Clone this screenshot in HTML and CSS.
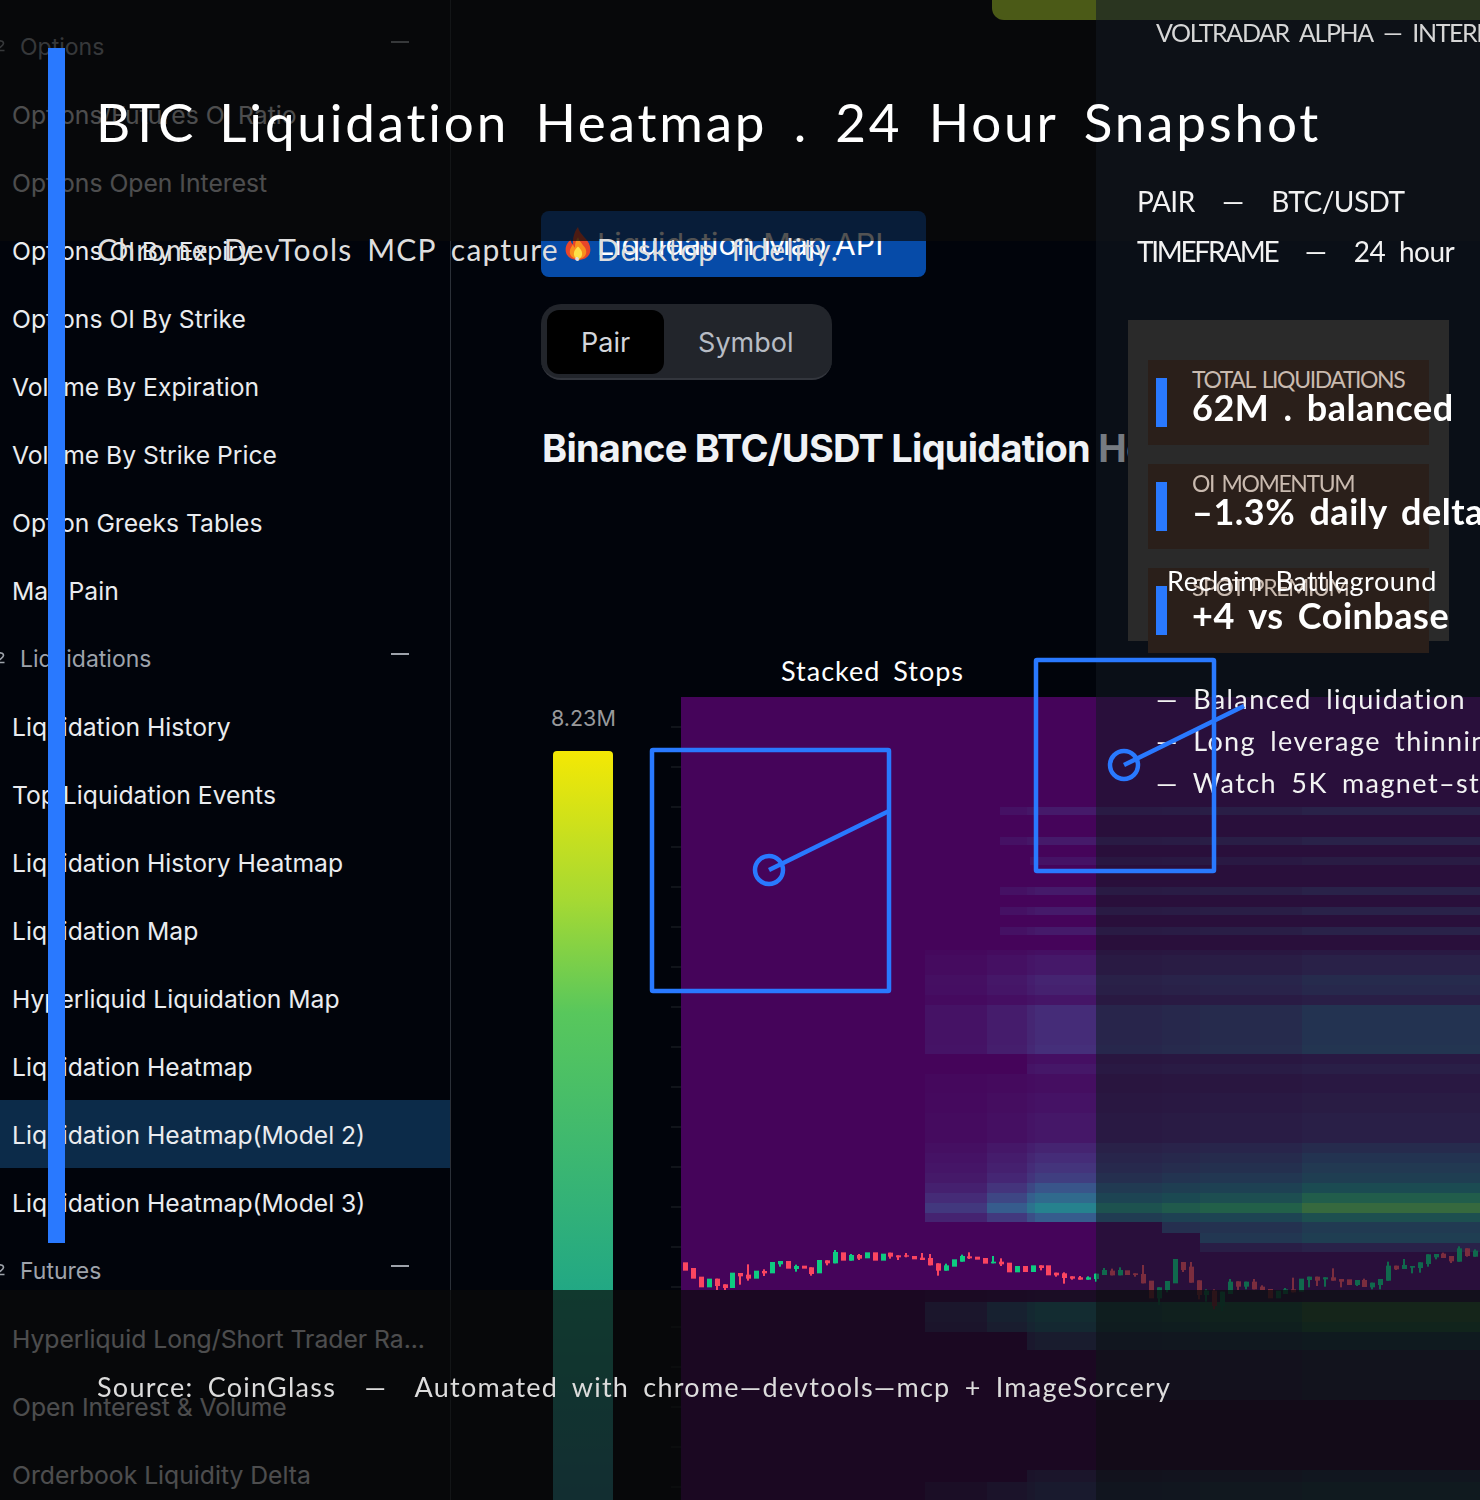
FILE: index.html
```html
<!DOCTYPE html>
<html lang="en">
  <head>
    <meta charset="UTF-8" />
    <meta name="viewport" content="width=device-width, initial-scale=1.0" />
    <title>BTC Liquidation Heatmap</title>
    <link rel="stylesheet" href="styles.css">
  </head>

  <body>
    <div class="page">
      <aside class="sidebar">
        <div class="nav-head">
          <svg class="nav-glyph" viewBox="0 0 5 12"><path d="M-3 2.5C-1 0 3.5 .5 3.5 3.5 3.5 6 -1 7 -3 10.5H4.5" /></svg>
          <span>Options</span><i class="nav-minus"></i>
        </div>
        <a class="nav-row">Options/Futures OI Ratio</a>
        <a class="nav-row">Options Open Interest</a>
        <a class="nav-row">Options OI By Expiry</a>
        <a class="nav-row">Options OI By Strike</a>
        <a class="nav-row">Volume By Expiration</a>
        <a class="nav-row">Volume By Strike Price</a>
        <a class="nav-row">Option Greeks Tables</a>
        <a class="nav-row">Max Pain</a>
        <div class="nav-head">
          <svg class="nav-glyph" viewBox="0 0 5 12"><path d="M-3 2.5C-1 0 3.5 .5 3.5 3.5 3.5 6 -1 7 -3 10.5H4.5" /></svg>
          <span>Liquidations</span><i class="nav-minus"></i>
        </div>
        <a class="nav-row">Liquidation History</a>
        <a class="nav-row">Top Liquidation Events</a>
        <a class="nav-row">Liquidation History Heatmap</a>
        <a class="nav-row">Liquidation Map</a>
        <a class="nav-row">Hyperliquid Liquidation Map</a>
        <a class="nav-row">Liquidation Heatmap</a>
        <a class="nav-row selected">Liquidation Heatmap(Model 2)</a>
        <a class="nav-row">Liquidation Heatmap(Model 3)</a>
        <div class="nav-head">
          <svg class="nav-glyph" viewBox="0 0 5 12"><path d="M-3 2.5C-1 0 3.5 .5 3.5 3.5 3.5 6 -1 7 -3 10.5H4.5" /></svg>
          <span>Futures</span><i class="nav-minus"></i>
        </div>
        <a class="nav-row">Hyperliquid Long/Short Trader Ra...</a>
        <a class="nav-row">Open Interest &amp; Volume</a>
        <a class="nav-row">Orderbook Liquidity Delta</a>
      </aside>

      <main class="content">
        <div class="api-badge">
          <svg class="fire" viewBox="0 0 24 32">
            <path fill="#e8452a" d="M12 0c1 5 4 7 7 11 3 3 5 7 5 11 0 6-5 10-12 10S0 28 0 22c0-5 3-8 5-10 0 3 1 4 2 5 0-6 1-12 5-17z" />
            <path fill="#f98f1d" d="M12 10c1 3 3 5 5 8 2 2 3 4 3 6 0 4-3 7-8 7s-8-3-8-7c0-3 2-5 3-7 1 2 1 2 2 3 0-4 1-7 3-10z" />
            <path fill="#fde047" d="M12 19c2 2 4 4 4 7s-2 5-4 5-4-2-4-5 2-5 4-7z" />
          </svg>
          <span>Liquidation Map API</span>
        </div>

        <div class="mode-tabs">
          <button class="mode-tab active">Pair</button>
          <button class="mode-tab">Symbol</button>
        </div>

        <h2 class="page-title">Binance BTC/USDT Liquidation Heatmap</h2>

        <section class="chart">
          <div class="legend">
            <span class="legend-max">8.23M</span>
            <div class="legend-bar"></div>
          </div>
          <div class="axis-ticks"></div>
          <canvas id="heatmap" width="799" height="803"></canvas>
        </section>
      </main>
    </div>

    <!-- capture overlay on top of the page -->
    <div class="dim dim-top"></div>
    <div class="dim dim-right"></div>
    <div class="dim dim-bottom"></div>
    <div class="olive-bar"></div>
    <div class="accent-bar"></div>

    <p class="ov ov-brand">VOLTRADAR ALPHA — INTERNAL</p>
    <h1 class="ov ov-title"><span class="btc">BTC</span> Liquidation Heatmap . 24 Hour Snapshot</h1>
    <p class="ov ov-sub">Chrome DevTools MCP capture . Desktop fidelity.</p>
    <p class="ov ov-meta ov-pair">PAIR  —  BTC/USDT</p>
    <p class="ov ov-meta ov-frame"><span class="tight">TIMEFRAME</span>  —  24 hour</p>

    <div class="stats">
      <div class="stat">
        <i class="stat-mark"></i>
        <div>
          <div class="stat-label">TOTAL LIQUIDATIONS</div>
          <div class="stat-value">62M . balanced</div>
        </div>
      </div>
      <div class="stat">
        <i class="stat-mark"></i>
        <div>
          <div class="stat-label">OI MOMENTUM</div>
          <div class="stat-value">–1.3% daily delta</div>
        </div>
      </div>
      <div class="stat">
        <i class="stat-mark"></i>
        <div>
          <div class="stat-label">SPOT PREMIUM</div>
          <div class="stat-value">+4 vs Coinbase</div>
        </div>
      </div>
    </div>

    <p class="ov ov-callout ov-reclaim">Reclaim Battleground</p>
    <p class="ov ov-callout ov-stops">Stacked Stops</p>

    <ul class="ov ov-notes">
      <li>— Balanced liquidation levels</li>
      <li>— Long leverage thinning out</li>
      <li>— Watch 5K magnet–stops</li>
    </ul>

    <p class="ov ov-source">Source: CoinGlass  —  Automated with chrome—devtools—mcp + ImageSorcery</p>

    <svg class="marks" viewBox="0 0 1480 1500">
      <rect x="652" y="750" width="237" height="241" rx="1" />
      <circle cx="769" cy="870" r="14" />
      <path d="M769 870 889 811" />
      <rect x="1036" y="660" width="178" height="211" rx="1" />
      <circle cx="1124" cy="765" r="14" />
      <path d="M1124 765 1244 706" />
    </svg>

    <script src="chart.js"></script>
  </body>
</html>
```

FILE: styles.css
```css
html,
body {
  margin: 0;
  padding: 0;
}

body {
  position: relative;
  width: 1480px;
  height: 1500px;
  overflow: hidden;
  background: #01040b;
  font-family: Inter, "Noto Sans", sans-serif;
  color: #eaecef;
}

.page {
  display: flex;
  height: 1500px;
  overflow: hidden;
}

/* sidebar */

.sidebar {
  flex: 0 0 450px;
  padding-top: 12px;
  border-right: 1px solid #2b3038;
}

.nav-head,
.nav-row {
  display: flex;
  align-items: center;
  height: 68px;
  box-sizing: border-box;
  padding-top: 2px;
  white-space: nowrap;
}

.nav-row {
  padding-left: 12px;
  font-size: 24.7px;
}

.nav-row.selected {
  background: #0c2b49;
}

.nav-head {
  color: #9ea3ab;
  padding-left: 20px;
  position: relative;
  font-size: 23px;
}

.nav-glyph {
  position: absolute;
  left: 0;
  top: 28px;
  width: 5px;
  height: 12px;
  fill: none;
  stroke: #9ea3ab;
  stroke-width: 1.6;
}

.nav-minus {
  width: 18px;
  height: 2px;
  margin-left: auto;
  margin-right: 41px;
  margin-top: -10px;
  background: #9ea3ab;
}

/* main column */

.content {
  flex: 1;
  padding: 211px 0 0 90px;
  min-width: 0;
}

.api-badge {
  display: flex;
  align-items: center;
  gap: 6px;
  width: 385px;
  height: 66px;
  box-sizing: border-box;
  padding: 0 0 0 24px;
  background: #064ba8;
  border-radius: 8px;
  font-size: 30.4px;
  color: #fff;
}

.fire {
  width: 26px;
  height: 33px;
  margin-top: -2px;
}

.mode-tabs {
  display: flex;
  width: 291px;
  height: 76px;
  box-sizing: border-box;
  margin-top: 27px;
  padding: 6px;
  background: #22252b;
  border-bottom: 2px solid #33363d;
  border-radius: 20px;
}

.mode-tab {
  border: none;
  background: none;
  height: 64px;
  padding: 0 34px;
  font-family: inherit;
  font-size: 27px;
  color: #b7bcc4;
  border-radius: 12px;
}

.mode-tab.active {
  background: #000;
  color: #d3d6db;
}

.page-title {
  margin: 45px 0 0 1px;
  font-size: 38px;
  line-height: 46px;
  font-weight: 700;
  letter-spacing: -0.75px;
  color: #f0f2f5;
  white-space: nowrap;
}

.chart {
  display: flex;
  margin: 226px 0 0 10px;
}

.legend {
  width: 64px;
  padding-top: 7px;
}

.legend-max {
  display: block;
  height: 28px;
  line-height: 28px;
  font-size: 21.5px;
  text-align: center;
  color: #98999b;
}

.legend-bar {
  width: 60px;
  height: 749px;
  margin: 19px 0 0 2px;
  border-radius: 4px 4px 0 0;
  background: linear-gradient(#f4e804 0%, #a5d933 20%, #58c75c 35%, #22a884 72%, #26828e 100%);
}

.axis-ticks {
  width: 10px;
  height: 803px;
  margin-left: 56px;
  background: linear-gradient(#10141a 0 2px, transparent 2px) 0 29px / 10px 40px;
}

#heatmap {
  display: block;
  flex: none;
}

/* overlay layers */

.dim {
  position: absolute;
}

.dim-top {
  left: 0;
  right: 0;
  top: 0;
  height: 241px;
  background: rgba(10, 10, 10, 0.7);
}

.dim-right {
  left: 1096px;
  right: 0;
  top: 0;
  bottom: 0;
  background: rgba(18, 26, 34, 0.55);
}

.dim-bottom {
  left: 0;
  right: 0;
  top: 1290px;
  bottom: 0;
  background: rgba(10, 10, 10, 0.7);
}

.olive-bar {
  position: absolute;
  left: 992px;
  right: 0;
  top: 0;
  height: 20px;
  border-radius: 0 0 0 12px;
  background: linear-gradient(90deg, #4b5a17 0 104px, #2a3520 104px);
}

.accent-bar {
  position: absolute;
  left: 48px;
  top: 48px;
  width: 17px;
  height: 1195px;
  background: #2979ff;
}

.ov {
  position: absolute;
  margin: 0;
  padding: 0;
  font-family: Lato, "Open Sans", sans-serif;
  font-weight: 400;
  white-space: pre;
}

.ov-brand {
  left: 1156px;
  right: 0;
  top: 17px;
  overflow: hidden;
  line-height: 30px;
  font-size: 25px;
  letter-spacing: -1.4px;
  word-spacing: 6px;
  color: #d6d6d6;
}

.ov-title {
  left: 96px;
  top: 89px;
  line-height: 66px;
  font-size: 53px;
  letter-spacing: 2.8px;
  word-spacing: 10px;
  color: #fff;
}

.btc {
  letter-spacing: -0.5px;
}

.ov-sub {
  left: 97px;
  top: 231px;
  line-height: 36px;
  font-size: 30px;
  letter-spacing: 1.2px;
  word-spacing: 6px;
  color: #dedede;
}

.ov-meta {
  left: 1137px;
  line-height: 34px;
  font-size: 28px;
  letter-spacing: -0.5px;
  word-spacing: 7px;
  color: #f2f2f2;
}

.ov-pair {
  top: 184px;
}

.ov-frame {
  top: 234px;
}

.tight {
  letter-spacing: -2.3px;
}

.stats {
  position: absolute;
  left: 1128px;
  top: 320px;
  width: 321px;
  height: 321px;
  box-sizing: border-box;
  padding: 40px 20px 0;
  background: #2a2a2a;
}

.stat {
  display: flex;
  align-items: center;
  gap: 25px;
  height: 85px;
  margin-bottom: 19px;
  padding-left: 8px;
  background: #2a1f1a;
  font-family: Lato, "Open Sans", sans-serif;
  white-space: nowrap;
}

.stat-mark {
  flex: none;
  width: 11px;
  height: 49px;
  background: #2979ff;
}

.stat-label {
  height: 26px;
  line-height: 26px;
  margin-top: -14px;
  font-size: 23px;
  letter-spacing: -1.4px;
  word-spacing: 3px;
  color: #c9baaf;
}

.stat-value {
  width: 288px;
  height: 36px;
  margin-top: -3px;
  overflow: hidden;
  line-height: 36px;
  font-size: 36px;
  font-weight: 700;
  letter-spacing: 0.5px;
  word-spacing: 5px;
  color: #fff;
}

.ov-callout {
  font-size: 27px;
  line-height: 32px;
  letter-spacing: 1px;
  word-spacing: 5px;
  color: #fff;
}

.ov-reclaim {
  left: 1167px;
  top: 565px;
  letter-spacing: 0.6px;
}

.ov-stops {
  left: 781px;
  top: 655px;
}

.ov-notes {
  left: 1156px;
  right: 0;
  top: 678px;
  overflow: hidden;
  list-style: none;
  font-size: 27px;
  line-height: 42px;
  letter-spacing: 1.4px;
  word-spacing: 6px;
  white-space: nowrap;
  color: #f2f2f2;
}

.ov-source {
  left: 97px;
  top: 1371px;
  line-height: 32px;
  font-size: 27px;
  letter-spacing: 1.25px;
  word-spacing: 6px;
  color: #dcdcdc;
}

.marks {
  position: absolute;
  left: 0;
  top: 0;
  width: 1480px;
  height: 1500px;
  fill: none;
  stroke: #2979ff;
  stroke-width: 4.5;
}
```

FILE: chart.js
```js
// heatmap cells and candles of the liquidation chart, drawn on one canvas
const canvas = document.querySelector('#heatmap');
const ctx = canvas.getContext('2d');
const originX = 681;
const originY = 697;

// colour ramp, 0 = empty, 1 = hottest
const ramp = [
  [0, 69, 4, 90],
  [0.15, 69, 47, 122],
  [0.3, 54, 92, 141],
  [0.5, 38, 130, 142],
  [0.75, 53, 183, 121],
  [1, 110, 206, 88]
];

function rampColor(v) {
  for (let i = 1; i < ramp.length; i++) {
    if (v <= ramp[i][0]) {
      const a = ramp[i - 1];
      const b = ramp[i];
      const t = (v - a[0]) / (b[0] - a[0]);
      const c = [1, 2, 3].map((k) => Math.round(a[k] + (b[k] - a[k]) * t));
      return `rgb(${c.join(',')})`;
    }
  }
  return 'rgb(110,206,88)';
}

// x0, x1, weight
const columns = [
  [925, 987, 0.18],
  [987, 1027, 0.3],
  [1027, 1035, 0.42],
  [1035, 1096, 0.5],
  [1096, 1162, 0.6],
  [1162, 1200, 0.68],
  [1200, 1302, 0.75],
  [1302, 1480, 0.95]
];

// y0, y1, level, first x that has the row
const rows = [
  [807, 815, 0.15, 1000],
  [837, 845, 0.15, 1000],
  [857, 865, 0.1, 1030],
  [887, 895, 0.15, 1000],
  [907, 915, 0.15, 1000],
  [927, 935, 0.15, 1000],
  [950, 955, 0.08, 925],
  [955, 975, 0.14, 925],
  [975, 985, 0.22, 925],
  [985, 995, 0.2, 925],
  [995, 1005, 0.12, 925],
  [1005, 1045, 0.28, 925],
  [1045, 1054, 0.3, 925],
  [1054, 1064, 0.08, 1027],
  [1064, 1074, 0.13, 1027],
  [1074, 1093, 0.07, 925],
  [1093, 1113, 0.1, 925],
  [1113, 1143, 0.13, 925],
  [1143, 1153, 0.22, 925],
  [1153, 1163, 0.28, 925],
  [1163, 1173, 0.33, 925],
  [1173, 1183, 0.4, 925],
  [1183, 1193, 0.55, 925],
  [1193, 1203, 0.75, 925],
  [1203, 1213, 1, 925],
  [1213, 1222, 0.6, 925],
  [1222, 1233, 0.35, 1162],
  [1233, 1243, 0.4, 1200],
  [1243, 1252, 0.15, 1200],
  [1290, 1302, 0.12, 925],
  [1302, 1312, 0.95, 925],
  [1312, 1322, 0.95, 925],
  [1322, 1332, 0.8, 925],
  [1332, 1350, 0.45, 1027],
  [1350, 1400, 0.2, 1096],
  [1470, 1482, 0.3, 1027],
  [1482, 1500, 0.42, 925]
];

ctx.fillStyle = rampColor(0);
ctx.fillRect(0, 0, canvas.width, canvas.height);

rows.forEach(([y0, y1, level, fromX]) => {
  columns.forEach(([x0, x1, weight]) => {
    const left = Math.max(x0, fromX);
    if (left >= x1) return;
    ctx.fillStyle = rampColor(level * weight);
    ctx.fillRect(left - originX, y0 - originY, x1 - left, y1 - y0);
  });
});

// colour, body top, body bottom, wick top, wick bottom; y counted from 1230 in thirds of a pixel
const candles = [
  'r 97 122', 'r 114 146', 'r 140 172', 'g 146 172', 'r 146 168 146 180',
  'r 163 174 163 180', 'g 128 174', 'r 129 139 129 164', 'r 134 146 103 152', 'g 122 146',
  'r 123 130 118 138', 'g 96 130', 'g 93 103 93 110', 'r 93 116', 'g 108 117 104 125',
  'r 107 116', 'r 112 132 112 137', 'g 90 130', 'r 91 100 91 106', 'g 66 100 60 100',
  'r 67 92', 'g 75 92 72 92', 'r 75 86 72 90', 'g 67 85', 'r 67 92',
  'g 71 92', 'r 68 80 68 86', 'r 76 82 76 90', 'r 76 80 69 82', 'r 78 88',
  'r 83 90 69 90', 'r 84 106 72 106', 'r 100 122 100 137', 'g 106 122 101 122', 'g 88 110',
  'g 78 95 74 95', 'r 79 85 67 87', 'r 80 89', 'r 84 101', 'g 95 100 78 100',
  'r 95 103 85 108', 'r 98 127', 'g 108 127', 'r 108 126', 'g 106 126',
  'r 106 114 106 121', 'r 106 136', 'r 128 136 128 140', 'r 130 144 127 161', 'r 139 146 139 149',
  'r 142 149 138 149', 'g 142 149 139 149', 'g 131 147 131 155',
  'g 120 135 114 135', 'r 122 136 116 136', 'g 120 136 112 136', 'r 121 135', 'r 130 135 130 140',
  'r 132 160 105 160', 'r 152 205', 'g 172 205 172 225', 'g 153 180 153 187', 'g 87 160',
  'r 96 120 96 126', 'r 110 158 96 158', 'r 151 195 151 208', 'g 182 195 178 215', 'r 182 228 178 238',
  'g 185 228 185 243', 'g 155 192 147 192', 'r 154 170 154 180', 'g 155 170 155 178', 'r 155 178 147 178',
  'r 170 180 166 180', 'r 177 205', 'g 182 205', 'g 178 192 174 192', 'r 178 187 143 187',
  'g 146 185', 'g 140 150 140 172', 'r 140 152 140 168', 'g 142 148 142 170', 'r 142 152 115 152',
  'r 147 155 147 172', 'r 148 165', 'g 150 165 150 168', 'r 150 171 146 171', 'g 158 172 158 178',
  'g 147 165 147 178', 'g 107 152 95 152', 'r 107 118 107 120', 'g 105 117 87 117', 'g 108 113 108 130',
  'g 97 114 97 128', 'g 73 102 73 110', 'g 72 82 72 88', 'r 71 84 68 84', 'r 78 94 78 99',
  'g 55 95 49 95', 'r 55 78 55 80', 'g 62 80 58 80', 'g 58 68'
];

function candleY(z) {
  return 1230 + z / 3 - originY;
}

candles.forEach((item, i) => {
  const [colour, top, bottom, wickTop, wickBottom] = item.split(' ');
  const x = Math.round(685 + 7.9 * i - originX);
  ctx.fillStyle = colour === 'g' ? '#0ecb81' : '#fb4560';
  ctx.fillRect(x - 2, candleY(+top), 5, (bottom - top) / 3);
  if (wickTop) {
    ctx.fillRect(x - 1, candleY(+wickTop), 2, (wickBottom - wickTop) / 3);
  }
});
```
